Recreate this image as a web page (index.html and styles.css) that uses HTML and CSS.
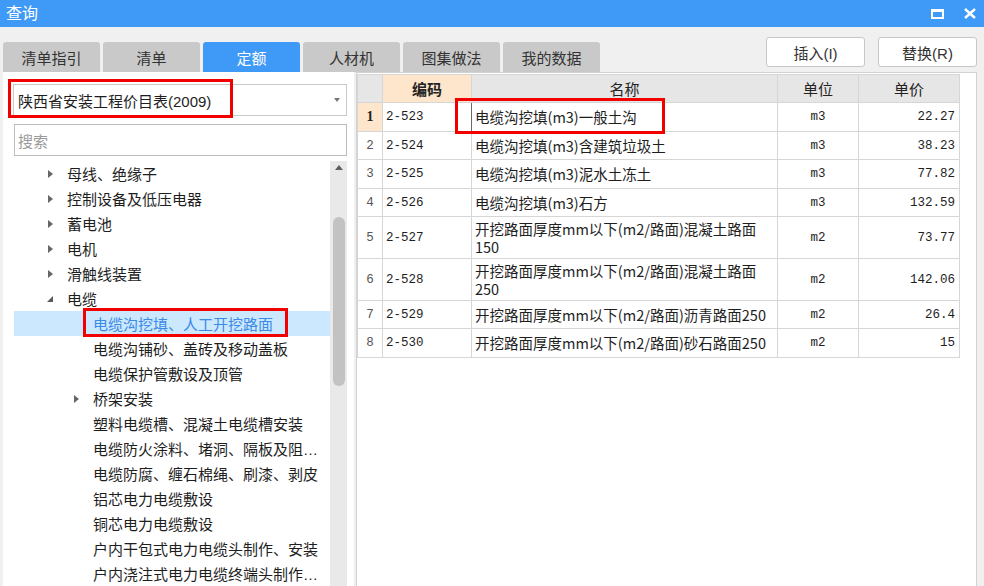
FILE: index.html
```html
<!DOCTYPE html>
<html lang="zh-CN">
<head>
<meta charset="utf-8">
<title>查询</title>
<link rel="stylesheet" href="styles.css">
</head>
<body>
<div class="app">
  <div class="titlebar">
    <span class="title">查询</span>
    <div class="win-ctrls">
      <svg class="ic-max" width="13" height="10" viewBox="0 0 13 10"><rect x="1" y="1.5" width="11" height="7.5" fill="none" stroke="#fff" stroke-width="2"/><rect x="0" y="0" width="13" height="3" fill="#fff"/></svg>
      <svg class="ic-close" width="12" height="11" viewBox="0 0 12 11"><path d="M1 1L11 10M11 1L1 10" stroke="#fff" stroke-width="2.4" fill="none"/></svg>
    </div>
  </div>

  <div class="toolbar">
    <div class="tabs">
      <div class="tab">清单指引</div>
      <div class="tab">清单</div>
      <div class="tab active">定额</div>
      <div class="tab">人材机</div>
      <div class="tab">图集做法</div>
      <div class="tab">我的数据</div>
    </div>
    <div class="actions">
      <div class="btn">插入(I)</div>
      <div class="btn">替换(R)</div>
    </div>
  </div>

  <div class="content">
    <div class="left">
      <div class="combo"><span>陕西省安装工程价目表(2009)</span><span class="caret"></span></div>
      <div class="search">搜索</div>
      <div class="tree">
        <div class="nodes">
          <div class="node"><span class="tw"><span class="arrow-r"></span></span><span class="label">母线、绝缘子</span></div>
          <div class="node"><span class="tw"><span class="arrow-r"></span></span><span class="label">控制设备及低压电器</span></div>
          <div class="node"><span class="tw"><span class="arrow-r"></span></span><span class="label">蓄电池</span></div>
          <div class="node"><span class="tw"><span class="arrow-r"></span></span><span class="label">电机</span></div>
          <div class="node"><span class="tw"><span class="arrow-r"></span></span><span class="label">滑触线装置</span></div>
          <div class="node"><span class="tw"><svg class="arrow-d" width="6" height="6" viewBox="0 0 6 6"><polygon points="6,0 6,6 0,6" fill="#595959"/></svg></span><span class="label">电缆</span></div>
          <div class="node l2 sel"><span class="tw"></span><span class="label">电缆沟挖填、人工开挖路面</span></div>
          <div class="node l2"><span class="tw"></span><span class="label">电缆沟铺砂、盖砖及移动盖板</span></div>
          <div class="node l2"><span class="tw"></span><span class="label">电缆保护管敷设及顶管</span></div>
          <div class="node l2"><span class="tw"><span class="arrow-r"></span></span><span class="label">桥架安装</span></div>
          <div class="node l2"><span class="tw"></span><span class="label">塑料电缆槽、混凝土电缆槽安装</span></div>
          <div class="node l2"><span class="tw"></span><span class="label">电缆防火涂料、堵洞、隔板及阻燃槽盒安装</span></div>
          <div class="node l2"><span class="tw"></span><span class="label">电缆防腐、缠石棉绳、刷漆、剥皮</span></div>
          <div class="node l2"><span class="tw"></span><span class="label">铝芯电力电缆敷设</span></div>
          <div class="node l2"><span class="tw"></span><span class="label">铜芯电力电缆敷设</span></div>
          <div class="node l2"><span class="tw"></span><span class="label">户内干包式电力电缆头制作、安装</span></div>
          <div class="node l2"><span class="tw"></span><span class="label">户内浇注式电力电缆终端头制作、安装</span></div>
        </div>
        <div class="scroll">
          <span class="sb-up"></span>
          <span class="sb-thumb"></span>
        </div>
      </div>
    </div>

    <div class="right">
      <table class="grid">
        <colgroup>
          <col class="c-no"><col class="c-code"><col class="c-name"><col class="c-unit"><col class="c-price">
        </colgroup>
        <thead>
          <tr>
            <th class="no"></th>
            <th class="hl">编码</th>
            <th>名称</th>
            <th>单位</th>
            <th>单价</th>
          </tr>
        </thead>
        <tbody>
          <tr class="h29 cur"><td class="no">1</td><td class="code focus">2-523</td><td class="name">电缆沟挖填(m3)一般土沟</td><td class="unit">m3</td><td class="price">22.27</td></tr>
          <tr class="h28"><td class="no">2</td><td class="code">2-524</td><td class="name">电缆沟挖填(m3)含建筑垃圾土</td><td class="unit">m3</td><td class="price">38.23</td></tr>
          <tr class="h29"><td class="no">3</td><td class="code">2-525</td><td class="name">电缆沟挖填(m3)泥水土冻土</td><td class="unit">m3</td><td class="price">77.82</td></tr>
          <tr class="h28"><td class="no">4</td><td class="code">2-526</td><td class="name">电缆沟挖填(m3)石方</td><td class="unit">m3</td><td class="price">132.59</td></tr>
          <tr class="h42"><td class="no">5</td><td class="code">2-527</td><td class="name">开挖路面厚度mm以下(m2/路面)混凝土路面150</td><td class="unit">m2</td><td class="price">73.77</td></tr>
          <tr class="h42"><td class="no">6</td><td class="code">2-528</td><td class="name">开挖路面厚度mm以下(m2/路面)混凝土路面250</td><td class="unit">m2</td><td class="price">142.06</td></tr>
          <tr class="h28"><td class="no">7</td><td class="code">2-529</td><td class="name">开挖路面厚度mm以下(m2/路面)沥青路面250</td><td class="unit">m2</td><td class="price">26.4</td></tr>
          <tr class="h29"><td class="no">8</td><td class="code">2-530</td><td class="name">开挖路面厚度mm以下(m2/路面)砂石路面250</td><td class="unit">m2</td><td class="price">15</td></tr>
        </tbody>
      </table>
    </div>
  </div>
</div>

<div class="mark mark-lib"></div>
<div class="mark mark-node"></div>
<div class="mark mark-row"></div>
</body>
</html>
```

FILE: styles.css
```css
* { box-sizing: border-box; }
html, body { margin: 0; padding: 0; }
body {
  width: 984px;
  height: 586px;
  overflow: hidden;
  position: relative;
  background: #f0f0f0;
  font-family: "Liberation Sans", "Noto Sans CJK SC", sans-serif;
  font-size: 15px;
  color: #222;
}
.app { display: flex; flex-direction: column; height: 586px; }

.titlebar {
  height: 27px;
  flex: none;
  background: #3f99f7;
  color: #fff;
  display: flex;
  align-items: center;
  padding: 0 8px 0 6px;
}
.title { flex: 1; font-size: 16px; line-height: 27px; }
.win-ctrls { display: flex; align-items: center; gap: 20px; }
.ic-max, .ic-close { display: block; }

.toolbar {
  height: 45px;
  flex: none;
  display: flex;
  padding: 0 7px 0 3px;
}
.tabs { display: flex; gap: 3px; align-self: flex-end; }
.tab {
  width: 97px;
  height: 30px;
  border-radius: 3px 3px 0 0;
  background: #c9c9c9;
  color: #333;
  display: flex;
  align-items: center;
  justify-content: center;
}
.tab.active { background: #3f99f7; color: #fff; }
.actions { margin-left: auto; display: flex; gap: 13px; padding-top: 10px; }
.btn {
  width: 99px;
  height: 30px;
  background: #fff;
  border: 1px solid #c8c8c8;
  border-radius: 3px;
  color: #333;
  display: flex;
  align-items: center;
  justify-content: center;
}

.content { flex: 1; min-height: 0; display: flex; padding: 0 7px 0 3px; }

.left {
  width: 351px;
  flex: none;
  background: #fff;
  padding: 12px 7px 0 10px;
  display: flex;
  flex-direction: column;
  min-height: 0;
}
.combo {
  height: 32px;
  flex: none;
  border: 1px solid #cacaca;
  display: flex;
  align-items: center;
  padding-left: 4px;
  color: #1e1e1e;
}
.caret {
  margin-left: auto;
  margin-right: 6px;
  width: 0;
  height: 0;
  border-left: 3.5px solid transparent;
  border-right: 3.5px solid transparent;
  border-top: 4px solid #777;
}
.search {
  height: 32px;
  flex: none;
  margin: 8px 0 0 1px;
  border: 1px solid #bcbcbc;
  padding-left: 3px;
  display: flex;
  align-items: center;
  color: #9a9a9a;
}
.tree {
  flex: 1;
  min-height: 0;
  margin: 5px 0 0 1px;
  display: flex;
  overflow: hidden;
}
.nodes { flex: 1; min-width: 0; }
.node {
  height: 25px;
  display: flex;
  align-items: center;
  padding-left: 31px;
  white-space: nowrap;
  color: #1e1e1e;
}
.node.l2 { padding-left: 57px; }
.node.sel { background: #cce8ff; color: #3a8ae6; }
.tw { width: 22px; flex: none; display: flex; align-items: center; }
.label { overflow: hidden; text-overflow: ellipsis; min-width: 0; }
.arrow-r {
  margin-left: 3px;
  width: 0;
  height: 0;
  border-top: 4.5px solid transparent;
  border-bottom: 4.5px solid transparent;
  border-left: 5px solid #666;
}
.arrow-d { display: block; margin-left: 2px; margin-top: 1px; }

.scroll {
  width: 17px;
  flex: none;
  background: #e9e9e9;
  display: flex;
  flex-direction: column;
  align-items: center;
}
.sb-up {
  margin-top: 4px;
  width: 0;
  height: 0;
  border-left: 4.5px solid transparent;
  border-right: 4.5px solid transparent;
  border-bottom: 5px solid #606060;
}
.sb-thumb {
  margin-top: 47px;
  width: 12px;
  height: 169px;
  border-radius: 6px;
  background: #c2c2c2;
}

.right {
  flex: 1;
  margin-left: 2px;
  background: #fff;
  border: 1px solid #d2d2d2;
  border-bottom: none;
  padding-top: 1px;
}
.grid {
  border-collapse: collapse;
  table-layout: fixed;
  width: 602px;
}
.c-no { width: 25px; }
.c-code { width: 89px; }
.c-name { width: 306px; }
.c-unit { width: 81px; }
.c-price { width: 101px; }
.grid th, .grid td {
  border: 1px solid #d6d6d6;
  padding: 0;
  overflow: hidden;
}
.grid th {
  height: 28px;
  background: #e6e6e6;
  font-weight: normal;
  font-family: "Noto Sans CJK SC", sans-serif;
  font-size: 15px;
  color: #222;
  text-align: center;
}
.grid th.hl { background: #fde6cb; font-weight: bold; }
.h28 { height: 28px; }
.h29 { height: 29px; }
.h42 { height: 42px; }
.grid td {
  font-family: "Liberation Mono", "Noto Sans CJK SC", monospace;
  font-size: 12.5px;
  color: #1e1e1e;
  vertical-align: middle;
}
.grid td.no { text-align: center; color: #555; }
.cur td.no {
  background: #fde6cb;
  font-family: "Liberation Serif", serif;
  font-weight: bold;
  font-size: 14px;
  color: #222;
}
.grid td.code { padding-left: 3px; }
.grid td.focus { border-left: 1px solid #3d8ee6; border-right: 1px solid #6a6a6a; }
.grid td.name {
  padding: 0 3px;
  font-family: "Noto Sans CJK SC", sans-serif;
  font-size: 14.5px;
  line-height: 18px;
}
.grid td.unit { text-align: center; }
.grid td.price { text-align: right; padding-right: 4px; }

.mark {
  position: absolute;
  border: 3px solid #f20000;
  pointer-events: none;
}
.mark-lib { left: 8px; top: 79px; width: 225px; height: 39px; }
.mark-node { left: 83px; top: 308px; width: 205px; height: 29px; }
.mark-row { left: 455px; top: 98px; width: 210px; height: 36px; }
```
